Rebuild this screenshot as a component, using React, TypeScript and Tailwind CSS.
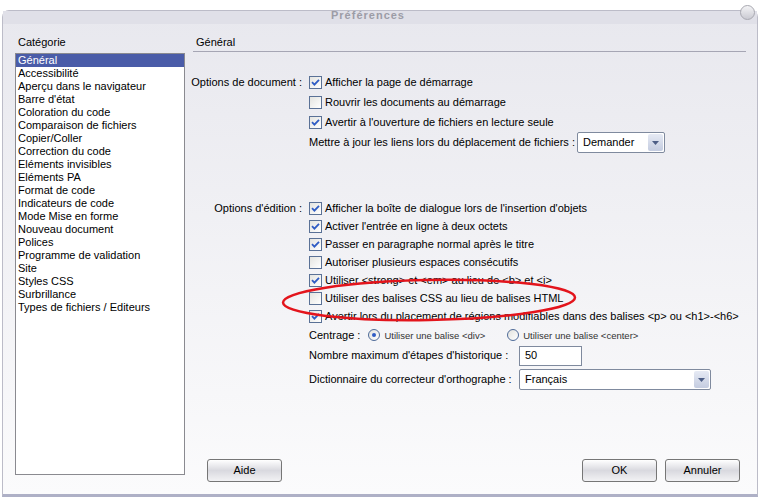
import React from 'react'

const categories = [
  'Général',
  'Accessibilité',
  'Aperçu dans le navigateur',
  "Barre d'état",
  'Coloration du code',
  'Comparaison de fichiers',
  'Copier/Coller',
  'Correction du code',
  'Eléments invisibles',
  'Eléments PA',
  'Format de code',
  'Indicateurs de code',
  'Mode Mise en forme',
  'Nouveau document',
  'Polices',
  'Programme de validation',
  'Site',
  'Styles CSS',
  'Surbrillance',
  'Types de fichiers / Editeurs',
]

function Checkbox({ checked }: { checked: boolean }) {
  return (
    <span className="flex h-[13px] w-[13px] shrink-0 items-center justify-center border border-[#5a7196] bg-gradient-to-br from-[#e4e4e0] to-white">
      {checked && (
        <svg width="9" height="9" viewBox="0 0 9 9">
          <path d="M1 4.2 L3.4 6.6 L8 1.8" fill="none" stroke="#2f5cc4" strokeWidth="1.8" />
        </svg>
      )}
    </span>
  )
}

function CheckRow({ checked, label, h = 'h-[18px]' }: { checked: boolean; label: string; h?: string }) {
  return (
    <div className={`flex items-center gap-[3px] ${h}`}>
      <Checkbox checked={checked} />
      <span className="whitespace-nowrap">{label}</span>
    </div>
  )
}

function Radio({ checked }: { checked: boolean }) {
  return (
    <span className="flex h-[12px] w-[12px] shrink-0 items-center justify-center rounded-full border border-[#4e6a98] bg-gradient-to-br from-[#e2e2de] to-white">
      {checked && <span className="h-[4px] w-[4px] rounded-full bg-[#2f5cc4]" />}
    </span>
  )
}

function SelectBox({ value, width }: { value: string; width: string }) {
  return (
    <div className={`flex h-[21px] items-center rounded-[2px] border border-[#7f8a9e] bg-white ${width}`}>
      <span className="flex-1 pl-[5px]">{value}</span>
      <span className="m-[1px] flex h-[17px] w-[15px] items-center justify-center rounded-[2px] bg-gradient-to-b from-[#e6eaf4] to-[#c4cce0]">
        <svg width="7" height="4" viewBox="0 0 7 4">
          <path d="M0 0 H7 L3.5 4 Z" fill="#4d5e86" />
        </svg>
      </span>
    </div>
  )
}

function Button({ label }: { label: string }) {
  return (
    <button className="flex h-[23px] w-[75px] items-center justify-center rounded-[3px] border border-[#767676] bg-gradient-to-b from-white via-[#d9d9df] to-[#f2f2f4] text-[11px] text-black">
      {label}
    </button>
  )
}

export default function App() {
  return (
    <div className="relative h-[498px] w-[759px] overflow-hidden bg-white pl-[2px] pr-[1px] pt-[10px] font-['Liberation_Sans',Arial,sans-serif] text-[11px] leading-[13px] text-black">
      <div className="flex h-[487px] flex-col rounded-t-[7px] border border-b-[3px] border-[#bcbcc8] border-b-[#aeb0c6] bg-gradient-to-b from-[#e8e8ee] to-[#fbfbfc]">
        {/* title bar */}
        <div className="relative h-[13px] bg-[#e0e0e8]">
          <div className="absolute left-0 right-[24px] -top-[2px] text-center text-[11px] font-bold tracking-[1px] text-[#9c9ca6]">
            Préférences
          </div>
          <span className="absolute right-[2px] -top-[6px] h-[15px] w-[15px] rounded-full border border-[#a8a8b0] bg-gradient-to-b from-[#f4f4f6] to-[#cacad2]" />
        </div>

        <div className="flex flex-1 pt-[12px]">
          {/* category list */}
          <div className="ml-[12px] flex w-[170px] flex-col">
            <div className="pl-[3px]">Catégorie</div>
            <div className="mt-[4px] h-[422px] border border-[#8a8a90] bg-white">
              {categories.map((c, i) => (
                <div
                  key={c}
                  className={`h-[13px] whitespace-nowrap pl-[2px] ${i === 0 ? 'bg-[#4a5ca8] text-white' : ''}`}
                >
                  {c}
                </div>
              ))}
            </div>
          </div>

          {/* right panel */}
          <div className="ml-[8px] flex w-[553px] flex-col">
            <div className="h-[16px] border-b border-[#a6a6b4] pl-[3px]">Général</div>

            <div className="mt-[20px] flex">
              <div className="flex h-[20px] w-[109px] shrink-0 items-center justify-end whitespace-nowrap">
                Options de document :
              </div>
              <div className="ml-[7px] flex flex-col">
                <CheckRow checked label="Afficher la page de démarrage" h="h-[20px]" />
                <CheckRow checked={false} label="Rouvrir les documents au démarrage" h="h-[20px]" />
                <CheckRow checked label="Avertir à l'ouverture de fichiers en lecture seule" h="h-[20px]" />
                <div className="flex h-[21px] items-center gap-[2px]">
                  <span className="whitespace-nowrap">Mettre à jour les liens lors du déplacement de fichiers :</span>
                  <SelectBox value="Demander" width="w-[88px]" />
                </div>
              </div>
            </div>

            <div className="mt-[46px] flex">
              <div className="flex h-[18px] w-[109px] shrink-0 items-center justify-end whitespace-nowrap">
                Options d'édition :
              </div>
              <div className="ml-[7px] flex flex-col">
                <CheckRow checked label="Afficher la boîte de dialogue lors de l'insertion d'objets" />
                <CheckRow checked label="Activer l'entrée en ligne à deux octets" />
                <CheckRow checked label="Passer en paragraphe normal après le titre" />
                <CheckRow checked={false} label="Autoriser plusieurs espaces consécutifs" />
                <CheckRow checked label="Utiliser <strong> et <em> au lieu de <b> et <i>" />
                <CheckRow checked={false} label="Utiliser des balises CSS au lieu de balises HTML" />
                <CheckRow checked label="Avertir lors du placement de régions modifiables dans des balises <p> ou <h1>-<h6>" />
                <div className="flex h-[20px] items-center">
                  <span>Centrage :</span>
                  <span className="ml-[8px] flex items-center gap-[4px]">
                    <Radio checked />
                    <span className="text-[9.5px] text-[#333]">Utiliser une balise &lt;div&gt;</span>
                  </span>
                  <span className="ml-[22px] flex items-center gap-[4px]">
                    <Radio checked={false} />
                    <span className="text-[9.5px] text-[#333]">Utiliser une balise &lt;center&gt;</span>
                  </span>
                </div>
                <div className="flex h-[21px] items-center">
                  <span className="w-[210px]">Nombre maximum d'étapes d'historique :</span>
                  <div className="flex h-[20px] w-[63px] items-center border border-[#7f8a9e] bg-white pl-[5px]">50</div>
                </div>
                <div className="mt-[3px] flex h-[21px] items-center">
                  <span className="w-[210px]">Dictionnaire du correcteur d'orthographe :</span>
                  <SelectBox value="Français" width="w-[192px]" />
                </div>
              </div>
            </div>

            <div className="mt-auto mb-[12px] flex items-center pr-[6px]">
              <div className="ml-[14px]">
                <Button label="Aide" />
              </div>
              <div className="ml-auto flex gap-[8px]">
                <Button label="OK" />
                <Button label="Annuler" />
              </div>
            </div>
          </div>
        </div>
      </div>

      {/* red annotation */}
      <svg className="pointer-events-none absolute inset-0" width="759" height="498" viewBox="0 0 759 498">
        <ellipse cx="429" cy="300" rx="146" ry="20" fill="none" stroke="#e3141c" strokeWidth="2.5" transform="rotate(-1 429 300)" />
      </svg>
    </div>
  )
}
